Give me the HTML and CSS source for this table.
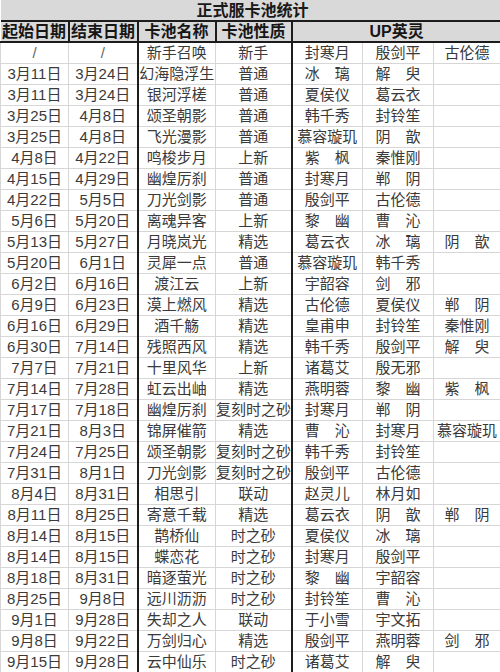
FILE: index.html
```html
<!DOCTYPE html>
<html lang="zh-CN">
<head>
<meta charset="utf-8">
<title>正式服卡池统计</title>
<link rel="stylesheet" href="styles.css">
</head>
<body>
<table class="sheet">
<colgroup>
<col class="c1"><col class="c2"><col class="c3"><col class="c4"><col class="c5"><col class="c6"><col class="c7">
</colgroup>
<tr class="title"><td colspan="7">正式服卡池统计</td></tr>
<tr class="head"><td>起始日期</td><td>结束日期</td><td>卡池名称</td><td>卡池性质</td><td colspan="3">UP英灵</td></tr>
<tr><td class="sl">/</td><td class="sl">/</td><td>新手召唤</td><td>新手</td><td>封寒月</td><td>殷剑平</td><td>古伦德</td></tr>
<tr><td>3月11日</td><td>3月24日</td><td>幻海隐浮生</td><td>普通</td><td>冰　璃</td><td>解　臾</td><td></td></tr>
<tr><td>3月11日</td><td>3月24日</td><td>银河浮槎</td><td>普通</td><td>夏侯仪</td><td>葛云衣</td><td></td></tr>
<tr><td>3月25日</td><td>4月8日</td><td>颂圣朝影</td><td>普通</td><td>韩千秀</td><td>封铃笙</td><td></td></tr>
<tr><td>3月25日</td><td>4月8日</td><td>飞光漫影</td><td>普通</td><td>慕容璇玑</td><td>阴　歆</td><td></td></tr>
<tr><td>4月8日</td><td>4月22日</td><td>鸣梭步月</td><td>上新</td><td>紫　枫</td><td>秦惟刚</td><td></td></tr>
<tr><td>4月15日</td><td>4月29日</td><td>幽煌厉刹</td><td>普通</td><td>封寒月</td><td>郸　阴</td><td></td></tr>
<tr><td>4月22日</td><td>5月5日</td><td>刀光剑影</td><td>普通</td><td>殷剑平</td><td>古伦德</td><td></td></tr>
<tr><td>5月6日</td><td>5月20日</td><td>离魂异客</td><td>上新</td><td>黎　幽</td><td>曹　沁</td><td></td></tr>
<tr><td>5月13日</td><td>5月27日</td><td>月晓岚光</td><td>精选</td><td>葛云衣</td><td>冰　璃</td><td>阴　歆</td></tr>
<tr><td>5月20日</td><td>6月1日</td><td>灵犀一点</td><td>普通</td><td>慕容璇玑</td><td>韩千秀</td><td></td></tr>
<tr><td>6月2日</td><td>6月16日</td><td>渡江云</td><td>上新</td><td>宇韶容</td><td>剑　邪</td><td></td></tr>
<tr><td>6月9日</td><td>6月23日</td><td>漠上燃风</td><td>精选</td><td>古伦德</td><td>夏侯仪</td><td>郸　阴</td></tr>
<tr><td>6月16日</td><td>6月29日</td><td>酒千觞</td><td>精选</td><td>皇甫申</td><td>封铃笙</td><td>秦惟刚</td></tr>
<tr><td>6月30日</td><td>7月14日</td><td>残照西风</td><td>精选</td><td>韩千秀</td><td>殷剑平</td><td>解　臾</td></tr>
<tr><td>7月7日</td><td>7月21日</td><td>十里风华</td><td>上新</td><td>诸葛艾</td><td>殷无邪</td><td></td></tr>
<tr><td>7月14日</td><td>7月28日</td><td>虹云出岫</td><td>精选</td><td>燕明蓉</td><td>黎　幽</td><td>紫　枫</td></tr>
<tr><td>7月17日</td><td>7月18日</td><td>幽煌厉刹</td><td>复刻时之砂</td><td>封寒月</td><td>郸　阴</td><td></td></tr>
<tr><td>7月21日</td><td>8月3日</td><td>锦屏催箭</td><td>精选</td><td>曹　沁</td><td>封寒月</td><td>慕容璇玑</td></tr>
<tr><td>7月24日</td><td>7月25日</td><td>颂圣朝影</td><td>复刻时之砂</td><td>韩千秀</td><td>封铃笙</td><td></td></tr>
<tr><td>7月31日</td><td>8月1日</td><td>刀光剑影</td><td>复刻时之砂</td><td>殷剑平</td><td>古伦德</td><td></td></tr>
<tr><td>8月4日</td><td>8月31日</td><td>相思引</td><td>联动</td><td>赵灵儿</td><td>林月如</td><td></td></tr>
<tr><td>8月11日</td><td>8月25日</td><td>寄意千载</td><td>精选</td><td>葛云衣</td><td>阴　歆</td><td>郸　阴</td></tr>
<tr><td>8月14日</td><td>8月15日</td><td>鹊桥仙</td><td>时之砂</td><td>夏侯仪</td><td>冰　璃</td><td></td></tr>
<tr><td>8月14日</td><td>8月15日</td><td>蝶恋花</td><td>时之砂</td><td>封寒月</td><td>殷剑平</td><td></td></tr>
<tr><td>8月18日</td><td>8月31日</td><td>暗逐萤光</td><td>时之砂</td><td>黎　幽</td><td>宇韶容</td><td></td></tr>
<tr><td>8月25日</td><td>9月8日</td><td>远川沥沥</td><td>时之砂</td><td>封铃笙</td><td>曹　沁</td><td></td></tr>
<tr><td>9月1日</td><td>9月28日</td><td>失却之人</td><td>联动</td><td>于小雪</td><td>宇文拓</td><td></td></tr>
<tr><td>9月8日</td><td>9月22日</td><td>万剑归心</td><td>精选</td><td>殷剑平</td><td>燕明蓉</td><td>剑　邪</td></tr>
<tr><td>9月15日</td><td>9月28日</td><td>云中仙乐</td><td>时之砂</td><td>诸葛艾</td><td>解　臾</td><td></td></tr>
</table>
</body>
</html>
```
FILE: styles.css
```css
html, body {
  margin: 0;
  padding: 0;
  background: #ffffff;
}
body {
  width: 500px;
  height: 672px;
  overflow: hidden;
  font-family: "Liberation Sans", "Noto Sans CJK SC", sans-serif;
}
.sheet {
  border-collapse: collapse;
  table-layout: fixed;
  width: 500px;
}
.c1 { width: 68px; }
.c2 { width: 69px; }
.c3 { width: 78px; }
.c4 { width: 76px; }
.c5 { width: 71px; }
.c6 { width: 71px; }
.c7 { width: 67px; }
.sheet tr {
  height: 21px;
}
.sheet td {
  padding: 0;
  text-align: center;
  white-space: nowrap;
  overflow: hidden;
  font-size: 15px;
  line-height: 19px;
  color: #3a3a3a;
  border: 1px solid #d6d6d6;
}
.sheet td.sl {
  color: #666;
}
.sheet tr td:nth-child(2),
.sheet tr td:nth-child(4) {
  border-right: 2px solid #1c1c1c;
}
.title td {
  background: #d9d9d9;
  font-weight: bold;
  font-size: 16px;
  color: #1a1a1a;
  border-top: none;
  border-left: none;
  border-right: none;
  border-bottom: 2px solid #1c1c1c;
  text-indent: 4px;
}
.head td {
  background: #d9d9d9;
  font-weight: bold;
  font-size: 16px;
  color: #161616;
  border: 2px solid #1c1c1c;
}
.head td:first-child {
  border-left: none;
}
.head td:last-child {
  border-right: none;
}
```
